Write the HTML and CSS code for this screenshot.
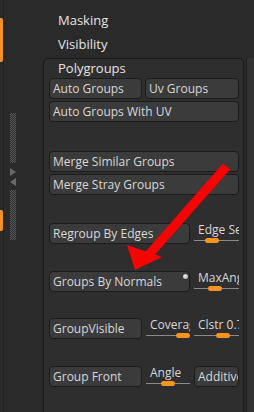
FILE: index.html
```html
<!DOCTYPE html>
<html>
<head>
<meta charset="utf-8">
<link rel="stylesheet" href="styles.css">
</head>
<body>
<div class="app">
  <div class="rail">
    <div class="edge">
      <div class="tab tab1"></div>
      <div class="tab tab2"></div>
    </div>
    <div class="scroll">
      <div class="checker c1"></div>
      <div class="tri tri-r"></div>
      <div class="tri tri-l"></div>
      <div class="checker c2"></div>
    </div>
  </div>
  <div class="main">
    <div class="head first">Masking</div>
    <div class="head">Visibility</div>
    <div class="panel">
      <div class="ptitle">Polygroups</div>
      <div class="row two">
        <div class="btn">Auto Groups</div>
        <div class="btn">Uv Groups</div>
      </div>
      <div class="row one sp2">
        <div class="btn">Auto Groups With UV</div>
      </div>
      <div class="row one sp29">
        <div class="btn">Merge Similar Groups</div>
      </div>
      <div class="row one sp2">
        <div class="btn">Merge Stray Groups</div>
      </div>
      <div class="row wide sp28">
        <div class="btn">Regroup By Edges</div>
        <div class="slider">
          <div class="slabel">Edge Seams</div>
          <div class="track"><div class="knob" style="left:11px"></div></div>
        </div>
      </div>
      <div class="row wide sp27">
        <div class="btn">Groups By Normals<span class="dot"></span></div>
        <div class="slider">
          <div class="slabel">MaxAngle</div>
          <div class="track"><div class="knob" style="left:14px"></div></div>
        </div>
      </div>
      <div class="row three sp26">
        <div class="btn">GroupVisible</div>
        <div class="slider">
          <div class="slabel">Coverage</div>
          <div class="track"><div class="knob" style="left:30px"></div></div>
        </div>
        <div class="slider">
          <div class="slabel">Clstr 0.7</div>
          <div class="track"><div class="knob" style="left:22px"></div></div>
        </div>
      </div>
      <div class="row three sp27">
        <div class="btn">Group Front</div>
        <div class="slider">
          <div class="slabel">Angle</div>
          <div class="track"><div class="knob" style="left:15px"></div></div>
        </div>
        <div class="btn">Additive</div>
      </div>
    </div>
  </div>
  <div class="side"><div class="side-track"></div></div>
  <svg class="arrow" width="254" height="412" viewBox="0 0 254 412">
    <polygon points="223,163.5 230,169.5 155.1,254.6 162,257 135,270 127,245 145.7,251.4" fill="#ff0000"/>
  </svg>
</div>
</body>
</html>
```

FILE: styles.css
```css
* { box-sizing: border-box; }
html, body { margin: 0; padding: 0; }
body {
  width: 254px;
  height: 412px;
  overflow: hidden;
  background: #2a2a2a;
  font-family: "Open Sans", "Noto Sans", sans-serif;
}
.app { display: flex; height: 412px; position: relative; }

.rail { width: 43px; flex-shrink: 0; display: flex; }
.edge { width: 4px; border-right: 1px solid #222222; display: flex; flex-direction: column; }
.tab { width: 3px; background: #f7931e; border-radius: 0 2px 2px 0; }
.tab1 { margin-top: 18px; height: 44px; }
.tab2 { margin-top: 148px; height: 21px; }
.scroll { margin-left: 6px; width: 6px; display: flex; flex-direction: column; }
.checker { background: repeating-conic-gradient(#585858 0 25%, #2e2e2e 0 50%) 0 0 / 2px 2px; }
.c1 { margin-top: 113px; height: 50px; }
.c2 { margin-top: 4px; height: 50px; }
.tri { width: 0; height: 0; }
.tri-r { margin-top: 5px; border-left: 6px solid #6a6a6a; border-top: 4px solid transparent; border-bottom: 4px solid transparent; }
.tri-l { margin-top: 2px; border-right: 6px solid #6a6a6a; border-top: 4.5px solid transparent; border-bottom: 4.5px solid transparent; }

.main { width: 201px; flex-shrink: 0; display: flex; flex-direction: column; }
.head { margin-left: 15px; height: 24px; line-height: 24px; font-size: 13px; color: #e4e4e4; }
.head.first { margin-top: 8px; }
.panel {
  margin-top: 2px;
  flex: 1;
  border: 1px solid #1b1b1b;
  border-bottom: none;
  border-radius: 5px 5px 0 0;
  background: #2e2e2e;
  padding: 0 4px 0 5px;
}
.ptitle { margin-left: 9px; height: 19px; line-height: 18px; font-size: 13px; color: #e4e4e4; }

.row { display: grid; height: 21px; column-gap: 3px; }
.two { grid-template-columns: 93px 94px; }
.one { grid-template-columns: 190px; }
.wide { grid-template-columns: 141px 45px; column-gap: 4px; }
.three { grid-template-columns: 93px 44px 45px; column-gap: 4px; }
.sp2 { margin-top: 2px; }
.sp26 { margin-top: 26px; }
.sp27 { margin-top: 27px; }
.sp28 { margin-top: 28px; }
.sp29 { margin-top: 29px; }

.btn {
  position: relative;
  height: 21px;
  border: 1px solid #1c1c1c;
  border-radius: 4px;
  background: #3b3b3b;
  color: #d8d8d8;
  font-size: 12px;
  line-height: 19px;
  padding-left: 3px;
  white-space: nowrap;
  overflow: hidden;
}
.dot {
  position: absolute;
  right: 1px;
  top: 2px;
  width: 5px;
  height: 5px;
  border-radius: 50%;
  background: radial-gradient(circle at 40% 40%, #f0f0f0, #9a9a9a);
}

.slider { height: 21px; overflow: hidden; }
.slabel { padding-left: 4px; font-size: 12px; line-height: 14px; height: 14px; color: #d8d8d8; white-space: nowrap; overflow: hidden; }
.track { position: relative; margin-top: 3px; height: 1px; background: #8a8a8a; }
.knob { position: absolute; top: -2px; width: 14px; height: 5px; border-radius: 3px; background: #f7931e; }

.side { flex: 1; display: flex; padding-left: 2px; }
.side-track { flex: 1; margin-top: 58px; border-left: 1px solid #1e1e1e; background: #323232; }

.arrow { position: absolute; left: 0; top: 0; pointer-events: none; }
```
